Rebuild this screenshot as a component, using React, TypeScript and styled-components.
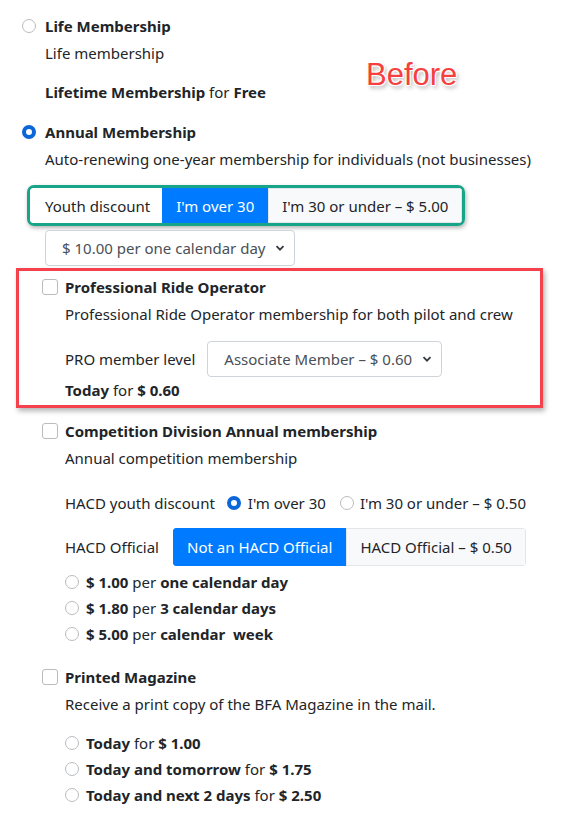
import styled, { createGlobalStyle } from 'styled-components';

const GlobalStyle = createGlobalStyle`
  body {
    margin: 0;
    background: #fff;
    font-family: "Noto Sans", "Open Sans", sans-serif;
    font-size: 15px;
    color: #212529;
  }
`;

const Page = styled.div`
  position: relative;
  width: 572px;
  height: 818px;
  padding: 13px 0 0 22px;
  box-sizing: border-box;
  overflow: hidden;
`;

const Line = styled.div<{ $top?: number; $indent?: number }>`
  display: flex;
  align-items: center;
  height: 26px;
  line-height: 26px;
  margin-top: ${(p) => p.$top ?? 0}px;
  padding-left: ${(p) => p.$indent ?? 0}px;
  white-space: nowrap;
`;

const Title = styled.span`
  font-weight: 700;
`;

const Radio = styled.span<{ $checked?: boolean; $gap?: number }>`
  flex: none;
  width: 14px;
  height: 14px;
  border-radius: 50%;
  box-sizing: border-box;
  margin-right: ${(p) => p.$gap ?? 9}px;
  border: ${(p) => (p.$checked ? '4px solid #0b66d8' : '1px solid #b9bcbf')};
  background: #fff;
`;

const Checkbox = styled.span`
  flex: none;
  width: 16px;
  height: 16px;
  border-radius: 3px;
  box-sizing: border-box;
  border: 1px solid #b9bcbf;
  margin-right: 7px;
`;

const Annotation = styled.div`
  position: absolute;
  left: 366px;
  top: 57px;
  font-family: "Liberation Sans", Arial, sans-serif;
  font-size: 31px;
  color: #f5403f;
  text-shadow: -1px -1px 0 #fff, 1px -1px 0 #fff, -1px 1px 0 #fff, 1px 1px 0 #fff,
    2px 3px 4px rgba(0, 0, 0, 0.35);
`;

const GreenFrame = styled.div`
  display: inline-flex;
  align-self: flex-start;
  margin: 13px 0 0 5px;
  border: 3px solid #17a589;
  border-radius: 7px;
  box-shadow: 1px 2px 4px rgba(0, 0, 0, 0.3);
  overflow: hidden;
`;

const SegLabel = styled.span`
  display: flex;
  align-items: center;
  height: 35px;
  padding: 0 12px 0 15px;
  background: #fff;
`;

const Seg = styled.span<{ $active?: boolean; $h?: number; $pad?: number }>`
  display: flex;
  align-items: center;
  height: ${(p) => p.$h ?? 35}px;
  padding: 0 ${(p) => p.$pad ?? 13}px;
  box-sizing: border-box;
  background: ${(p) => (p.$active ? '#007bff' : '#f8f9fa')};
  color: ${(p) => (p.$active ? '#fff' : '#212529')};
  border: 1px solid ${(p) => (p.$active ? '#007bff' : '#e3e5e8')};
`;

const Group = styled.div`
  display: inline-flex;
  border-radius: 4px;
  overflow: hidden;
`;

const Select = styled.div<{ $w: number }>`
  display: flex;
  align-items: center;
  justify-content: space-between;
  width: ${(p) => p.$w}px;
  height: 36px;
  box-sizing: border-box;
  padding: 0 9px 0 16px;
  border: 1px solid #ced4da;
  border-radius: 4px;
  color: #495057;
  background: #fff;
`;

const Column = styled.div`
  display: flex;
  flex-direction: column;
`;

const SelectWrap = styled.div`
  margin: 4px 0 0 23px;
`;

const RedBox = styled.div`
  display: flex;
  flex-direction: column;
  width: 527px;
  box-sizing: border-box;
  margin: 2px 0 0 -6px;
  padding: 3px 0 2px 23px;
  border: 3px solid #f4414b;
  box-shadow: 2px 3px 5px rgba(0, 0, 0, 0.3);
`;

const FieldRow = styled.div<{ $top: number; $indent?: number; $gap?: number }>`
  display: flex;
  align-items: center;
  gap: ${(p) => p.$gap ?? 12}px;
  min-height: 26px;
  line-height: 26px;
  margin-top: ${(p) => p.$top}px;
  padding-left: ${(p) => p.$indent ?? 0}px;
  white-space: nowrap;
`;

const Choices = styled.span`
  display: flex;
`;

const Inline = styled.span`
  display: flex;
  align-items: center;
  margin-right: 14px;
`;

function Chevron() {
  return (
    <svg width="10" height="8" viewBox="0 0 10 8">
      <path d="M1.5 2.2 5 5.7 8.5 2.2" fill="none" stroke="#343a40" strokeWidth="1.8" />
    </svg>
  );
}

export default function App() {
  return (
    <>
      <GlobalStyle />
      <Page>
        <Annotation>Before</Annotation>
        <Column>
          <Line>
            <Radio />
            <Title>Life Membership</Title>
          </Line>
          <Line $top={1} $indent={23}>Life membership</Line>
          <Line $top={13} $indent={23}>
            <Title>Lifetime Membership</Title>&nbsp;for&nbsp;<Title>Free</Title>
          </Line>
          <Line $top={14}>
            <Radio $checked />
            <Title>Annual Membership</Title>
          </Line>
          <Line $top={1} $indent={23}>
            Auto-renewing one-year membership for individuals (not businesses)
          </Line>
          <GreenFrame>
            <SegLabel>Youth discount</SegLabel>
            <Seg $active>I'm over 30</Seg>
            <Seg>I'm 30 or under – $ 5.00</Seg>
          </GreenFrame>
          <SelectWrap>
            <Select $w={250}>
              $ 10.00 per one calendar day
              <Chevron />
            </Select>
          </SelectWrap>

          <RedBox>
            <Line>
              <Checkbox />
              <Title>Professional Ride Operator</Title>
            </Line>
            <Line $top={1} $indent={23}>
              Professional Ride Operator membership for both pilot and crew
            </Line>
            <FieldRow $top={14} $indent={23}>
              PRO member level
              <Select $w={235}>
                Associate Member – $ 0.60
                <Chevron />
              </Select>
            </FieldRow>
            <Line $indent={23}>
              <Title>Today</Title>&nbsp;for&nbsp;<Title>$ 0.60</Title>
            </Line>
          </RedBox>

          <Line $top={10} $indent={20}>
            <Checkbox />
            <Title>Competition Division Annual membership</Title>
          </Line>
          <Line $top={1} $indent={43}>Annual competition membership</Line>
          <FieldRow $top={19} $indent={43}>
            HACD youth discount
            <Choices>
              <Inline>
                <Radio $checked $gap={7} />
                I'm over 30
              </Inline>
              <Inline>
                <Radio $gap={6} />
                I'm 30 or under – $ 0.50
              </Inline>
            </Choices>
          </FieldRow>
          <FieldRow $top={12} $indent={43} $gap={14}>
            HACD Official
            <Group>
              <Seg $active $h={38}>Not an HACD Official</Seg>
              <Seg $h={38}>HACD Official – $ 0.50</Seg>
            </Group>
          </FieldRow>
          <Line $top={3} $indent={43}>
            <Radio $gap={7} />
            <Title>$ 1.00</Title>&nbsp;per&nbsp;<Title>one calendar day</Title>
          </Line>
          <Line $indent={43}>
            <Radio $gap={7} />
            <Title>$ 1.80</Title>&nbsp;per&nbsp;<Title>3 calendar days</Title>
          </Line>
          <Line $indent={43}>
            <Radio $gap={7} />
            <Title>$ 5.00</Title>&nbsp;per&nbsp;<Title>calendar&nbsp; week</Title>
          </Line>

          <Line $top={17} $indent={20}>
            <Checkbox />
            <Title>Printed Magazine</Title>
          </Line>
          <Line $top={1} $indent={43}>Receive a print copy of the BFA Magazine in the mail.</Line>
          <Line $top={13} $indent={43}>
            <Radio $gap={7} />
            <Title>Today</Title>&nbsp;for&nbsp;<Title>$ 1.00</Title>
          </Line>
          <Line $indent={43}>
            <Radio $gap={7} />
            <Title>Today and tomorrow</Title>&nbsp;for&nbsp;<Title>$ 1.75</Title>
          </Line>
          <Line $indent={43}>
            <Radio $gap={7} />
            <Title>Today and next 2 days</Title>&nbsp;for&nbsp;<Title>$ 2.50</Title>
          </Line>
        </Column>
      </Page>
    </>
  );
}
